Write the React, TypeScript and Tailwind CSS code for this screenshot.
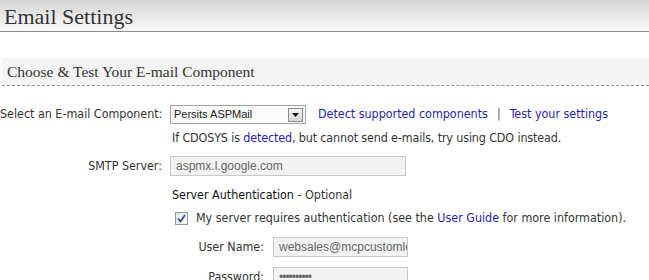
import React from "react";

const sans = { fontFamily: '"DejaVu Sans Condensed", "DejaVu Sans", Verdana, sans-serif' };

export default function App() {
  return (
    <div className="w-[649px] h-[280px] overflow-hidden bg-white text-[#333]">
      <div className="h-[32px] bg-gradient-to-b from-[#d4d4d4] to-[#fbfbfb] border-b border-[#8c8c8c] flex items-end pl-[4px] pb-[3px]">
        <span className="text-[22px] leading-none text-[#333] font-['Liberation_Serif',serif]">Email Settings</span>
      </div>
      <div className="mt-[26px] ml-[2px] h-[28px] bg-[#f4f4f4] border-b border-dashed border-[#999] flex items-center pl-[5px]">
        <span className="text-[15.5px] text-[#333] font-['Liberation_Serif',serif]">Choose &amp; Test Your E-mail Component</span>
      </div>
      <div className="text-[12.4px] text-[#333] font-['DejaVu_Sans_Condensed','DejaVu_Sans',sans-serif]" style={sans}>
        <div className="mt-[19px] flex items-center h-[19px]">
          <div className="w-[170px] text-right pr-[8px] whitespace-nowrap">Select an E-mail Component:</div>
          <div className="w-[136px] h-[19px] border border-[#a5a5a5] bg-[#fafafa] flex items-center justify-between pl-[3px] pr-[2px]">
            <span className="text-[11px] font-['Liberation_Sans',sans-serif] text-[#222]">Persits ASPMail</span>
            <span className="w-[15px] h-[14px] border border-[#8a8a8a] bg-gradient-to-b from-[#f4f4f4] to-[#d8d8d8] flex items-center justify-center">
              <svg width="7" height="4" viewBox="0 0 7 4"><path d="M0 0h7L3.5 4z" fill="#111" /></svg>
            </span>
          </div>
          <a className="ml-[12px] text-[#1f1fb0] whitespace-nowrap">Detect supported components</a>
          <span className="mx-[9px] text-[#555]">|</span>
          <a className="text-[#1f1fb0] whitespace-nowrap">Test your settings</a>
        </div>
        <div className="mt-[5px] pl-[172px] h-[16px] whitespace-nowrap tracking-[-0.12px]">
          If CDOSYS is <a className="text-[#1f1fb0]">detected</a>, but cannot send e-mails, try using CDO instead.
        </div>
        <div className="mt-[11px] flex items-center h-[20px]">
          <div className="w-[170px] text-right pr-[8px]">SMTP Server:</div>
          <div className="w-[236px] h-[20px] border border-[#c8c8c8] bg-[#f2f2f2] flex items-center pl-[5px]">
            <span className="text-[12px] font-['Liberation_Sans',sans-serif] text-[#666]">aspmx.l.google.com</span>
          </div>
        </div>
        <div className="mt-[10px] pl-[172px] h-[16px] whitespace-nowrap">
          <span className="text-[#111]">Server Authentication</span> - Optional
        </div>
        <div className="mt-[8px] pl-[175px] flex items-center h-[16px] whitespace-nowrap">
          <span className="w-[13px] h-[13px] border border-[#8f9aa8] bg-gradient-to-br from-[#dfe4ea] to-[#fbfbfb] flex items-center justify-center mr-[8px]">
            <svg width="9" height="9" viewBox="0 0 9 9"><path d="M1 4.5l2.5 3L8 1" stroke="#2d4f9e" strokeWidth="1.7" fill="none" /></svg>
          </span>
          <span>My server requires authentication (see the <a className="text-[#1f1fb0]">User Guide</a> for more information).</span>
        </div>
        <div className="mt-[11px] flex items-center h-[20px]">
          <div className="w-[273px] text-right pr-[9px]">User Name:</div>
          <div className="w-[135px] h-[20px] border border-[#c8c8c8] bg-[#f2f2f2] flex items-center pl-[5px] overflow-hidden">
            <span className="text-[12px] font-['Liberation_Sans',sans-serif] text-[#666] whitespace-nowrap">websales@mcpcustomleads.com</span>
          </div>
        </div>
        <div className="mt-[10px] flex items-center h-[20px]">
          <div className="w-[273px] text-right pr-[9px]">Password:</div>
          <div className="w-[135px] h-[20px] border border-[#c8c8c8] bg-[#f2f2f2] flex items-center pl-[5px] overflow-hidden">
            <span className="text-[12px] font-['Liberation_Sans',sans-serif] text-[#666] whitespace-nowrap tracking-[-1px]">••••••••••</span>
          </div>
        </div>
      </div>
    </div>
  );
}
